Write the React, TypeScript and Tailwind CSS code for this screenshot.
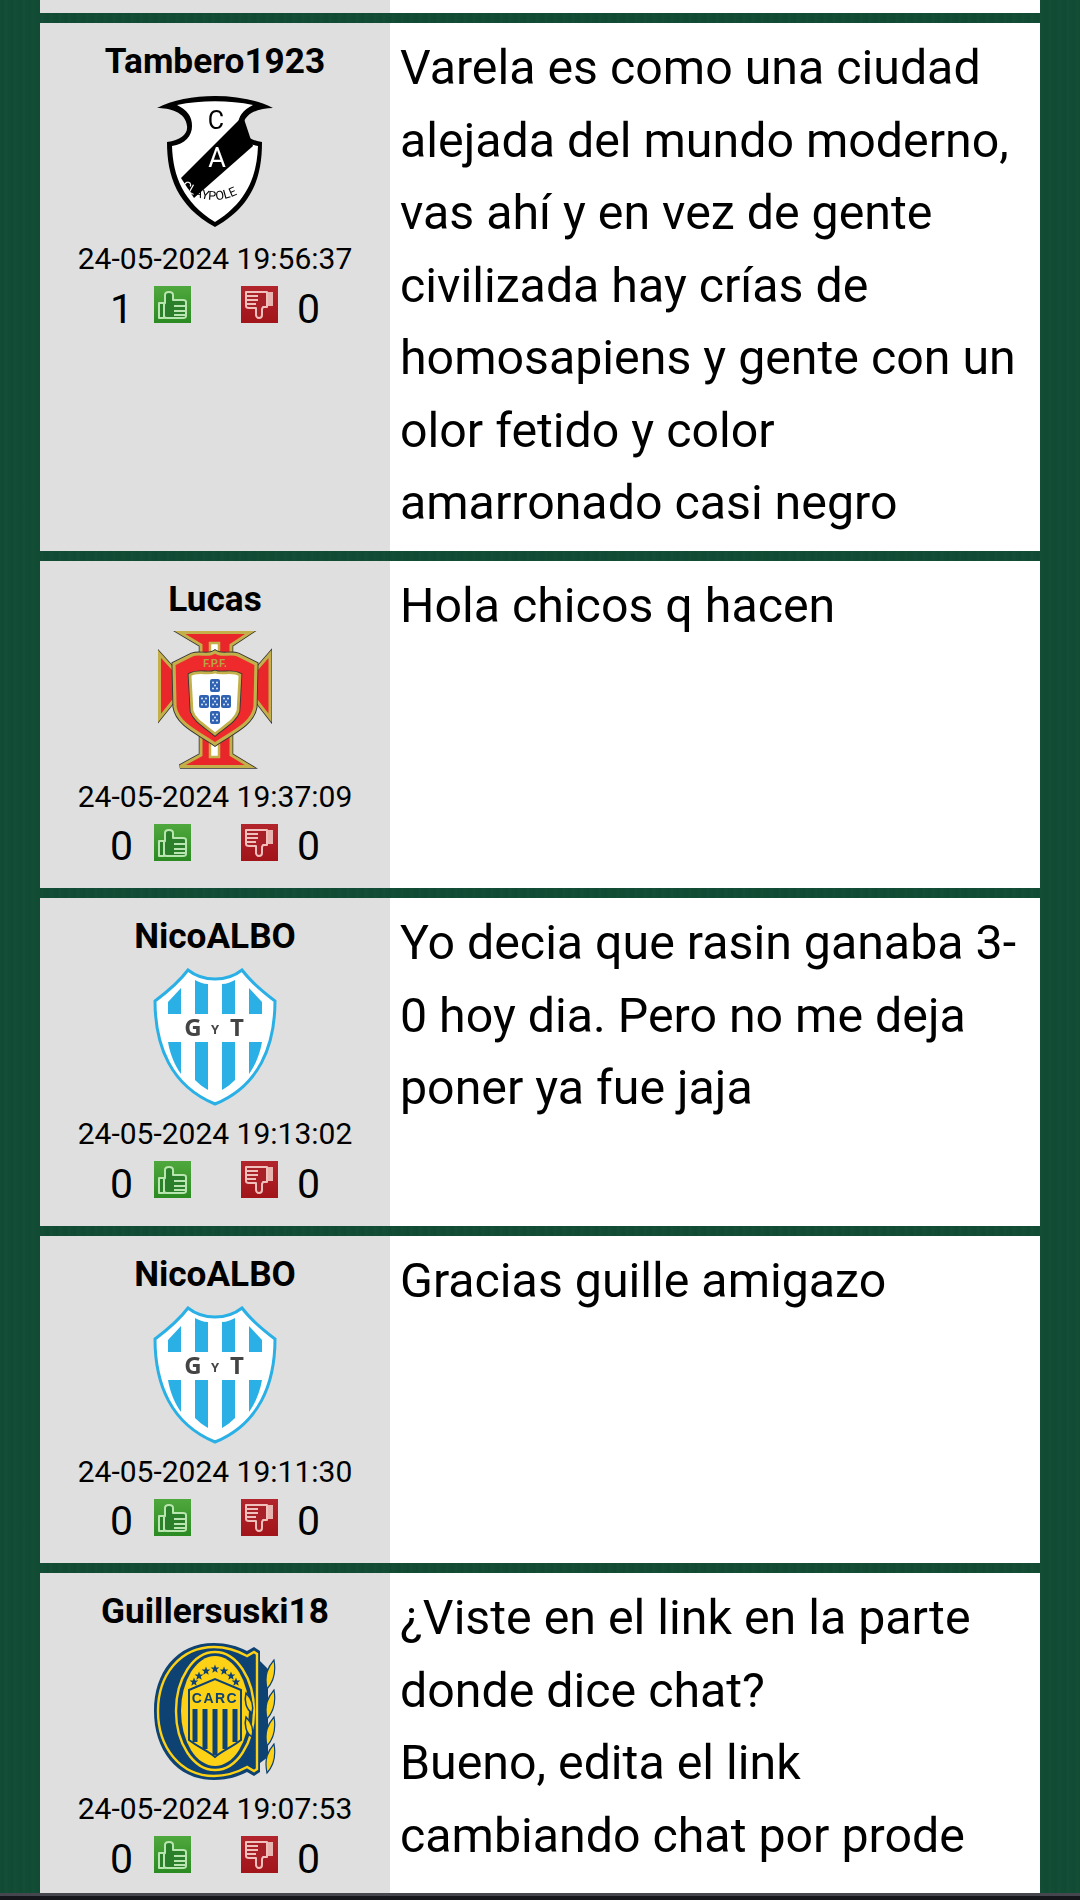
import React from 'react';

const ThumbUp = () => (
  <svg width="37" height="37" viewBox="0 0 37 37" className="block">
    <defs>
      <linearGradient id="upBg" x1="0" y1="0" x2="0" y2="1">
        <stop offset="0" stopColor="#4fa83d" />
        <stop offset="1" stopColor="#2b8a22" />
      </linearGradient>
    </defs>
    <rect width="37" height="37" fill="url(#upBg)" />
    <g className="blur-[0.7px]">
      <path
        d="M5 17h5v15H5zM10 18l1-1V9c0-2 1-3 4-3s4 1 4 3v5h10c2 0 3 1 3 2v14c0 2-1 2-3 2H12l-2-1"
        fill="#2c7f2a"
        stroke="#b9e6b0"
        strokeWidth="2"
        strokeLinejoin="round"
      />
      <path d="M20 20h12M20 25h12M20 29h12" stroke="#b9e6b0" strokeWidth="2" />
    </g>
  </svg>
);

const ThumbDown = () => (
  <svg width="37" height="37" viewBox="0 0 37 37" className="block">
    <defs>
      <linearGradient id="downBg" x1="0" y1="0" x2="0" y2="1">
        <stop offset="0" stopColor="#b3252c" />
        <stop offset="1" stopColor="#a0141a" />
      </linearGradient>
    </defs>
    <rect width="37" height="37" fill="url(#downBg)" />
    <g className="blur-[0.7px]">
      <path
        d="M5 6h21v15h-4l-1 2v6c0 2-1 3-3 3s-3-2-3-3v-7H8c-2 0-3-1-3-2z"
        fill="#a82028"
        stroke="#f0c0bc"
        strokeWidth="2"
        strokeLinejoin="round"
      />
      <path d="M5 10h12M5 14h12M5 18h10" stroke="#f0c0bc" strokeWidth="2" />
      <path d="M27 6h5v14h-5z" fill="#e8b4b0" />
    </g>
  </svg>
);

const Claypole = () => (
  <svg width="116" height="132" viewBox="0 0 116 132" className="block">
    <path
      d="M0 12C30 -4 86 -4 116 12C104 12 87 16 86 30C85 38 92 44 105 46C105 80 96 110 58 131C20 110 10 80 10 46C24 44 31 38 30 30C29 16 12 12 0 12Z"
      fill="#000"
    />
    <path
      d="M20 9C44 4 72 4 96 9C86 14 81 20 81 30C81 40 88 48 101 50C100 80 90 106 58 126C26 106 16 80 15 50C28 48 35 40 35 30C35 20 30 14 20 9Z"
      fill="#fff"
    />
    <path d="M86 20L96 50L37 102L24 82Z" fill="#000" />
    <path id="claypoleArc" d="M24 91Q57 117 92 91" fill="none" />
    <text x="59" y="33" textAnchor="middle" fontFamily="Roboto, sans-serif" fontSize="25" fill="#000">C</text>
    <text x="60" y="71" textAnchor="middle" fontFamily="Roboto, sans-serif" fontSize="27" fill="#fff">A</text>
    <text fontFamily="Roboto, sans-serif" fontSize="12.5" fill="#000">
      <textPath href="#claypoleArc">
        <tspan fill="#fff">CL</tspan>AYPOLE
      </textPath>
    </text>
  </svg>
);

const Quina = ({ x, y }: { x: number; y: number }) => (
  <g>
    <rect x={x} y={y} width="10" height="13" rx="2" fill="#2f62b3" />
    <circle cx={x + 3} cy={y + 3.5} r="1" fill="#dfe8f5" />
    <circle cx={x + 7} cy={y + 3.5} r="1" fill="#dfe8f5" />
    <circle cx={x + 5} cy={y + 6.5} r="1" fill="#dfe8f5" />
    <circle cx={x + 3} cy={y + 9.5} r="1" fill="#dfe8f5" />
    <circle cx={x + 7} cy={y + 9.5} r="1" fill="#dfe8f5" />
  </g>
);

const Portugal = () => {
  const cross = 'M22 1.5H92L73 14V124L92 135.5H22L43 124V14ZM1.5 23L16 39V69L1.5 87ZM112 23L98 39V69L112 87Z';
  const arms = 'M14 40H100V68H14Z';
  return (
    <svg width="114" height="138" viewBox="0 0 114 138" className="block">
      <path d={arms} fill="#e9262a" stroke="#c4b04a" strokeWidth="2" />
      <path d={cross} fill="none" stroke="#333" strokeWidth="4.5" strokeLinejoin="miter" />
      <path d={cross} fill="#e9262a" stroke="#c4b04a" strokeWidth="3" strokeLinejoin="miter" />
      <rect x="52" y="12" width="9" height="16" fill="#fff" stroke="#c4b04a" strokeWidth="2.5" />
      <rect x="52" y="110" width="9" height="16" fill="#fff" stroke="#c4b04a" strokeWidth="2.5" />
      <path
        d="M16 33L34 24C42 21 50 26 57 21C64 26 72 21 80 24L98 33L97 76C94 94 72 102 57 113C42 102 20 94 17 76Z"
        fill="none"
        stroke="#333"
        strokeWidth="5"
      />
      <path
        d="M16 33L34 24C42 21 50 26 57 21C64 26 72 21 80 24L98 33L97 76C94 94 72 102 57 113C42 102 20 94 17 76Z"
        fill="#ef2a2c"
        stroke="#c4b04a"
        strokeWidth="3.2"
      />
      <path
        d="M32 44C40 39 50 44 57 41C64 44 74 39 82 44L80 80C77 90 66 95 57 103C48 95 37 90 34 80Z"
        fill="#fff"
        stroke="#333"
        strokeWidth="4.5"
      />
      <path
        d="M32 44C40 39 50 44 57 41C64 44 74 39 82 44L80 80C77 90 66 95 57 103C48 95 37 90 34 80Z"
        fill="#fff"
        stroke="#c4b04a"
        strokeWidth="2.8"
      />
      <Quina x={52} y={48} />
      <Quina x={41} y={64} />
      <Quina x={52} y={64} />
      <Quina x={63} y={64} />
      <Quina x={52} y={80} />
      <text x="57" y="36" textAnchor="middle" fontFamily="Roboto, sans-serif" fontWeight="700" fontSize="11" fill="#b9a444">
        F.P.F.
      </text>
    </svg>
  );
};

const Gyt = () => (
  <svg width="124" height="138" viewBox="0 0 124 138" className="block">
    <path
      d="M35 2C50 14 74 14 89 2C98 14 110 24 122 33C122 78 106 118 62 136C18 118 2 78 2 33C14 24 26 14 35 2Z"
      fill="#fff"
      stroke="#2bb0e6"
      strokeWidth="3"
    />
    <path d="M15 34L28 20V46H15ZM42 12C46 14 50 16 55 16V46H42ZM69 16C74 16 78 14 82 12V46H69ZM96 20L109 34V46H96Z" fill="#2bb0e6" />
    <path d="M15 74H28V106C22 98 17 86 15 74ZM42 74H55V122C50 119 46 116 42 112ZM69 74H82V112C78 116 74 119 69 122ZM96 74H109C107 86 102 98 96 106Z" fill="#2bb0e6" />
    <text x="40" y="68" textAnchor="middle" fontFamily="'Open Sans', sans-serif" fontWeight="700" fontSize="24" fill="#444">G</text>
    <text x="62" y="66" textAnchor="middle" fontFamily="'Open Sans', sans-serif" fontWeight="700" fontSize="13" fill="#444">Y</text>
    <text x="84" y="68" textAnchor="middle" fontFamily="'Open Sans', sans-serif" fontWeight="700" fontSize="24" fill="#444">T</text>
  </svg>
);

const starPoints = (cx: number, cy: number, r: number) =>
  Array.from({ length: 10 }, (_, i) => {
    const radius = i % 2 === 0 ? r : r * 0.42;
    const angle = (Math.PI / 5) * i - Math.PI / 2;
    return `${cx + radius * Math.cos(angle)},${cy + radius * Math.sin(angle)}`;
  }).join(' ');

const Rosario = () => {
  const stars = [
    [40, 39],
    [45, 33],
    [52, 28],
    [61, 26],
    [70, 28],
    [77, 33],
    [82, 39],
  ];
  const leaves = [
    'M113 46C110 32 114 24 120 17C122 28 120 38 113 46Z',
    'M113 76C110 62 114 54 120 47C122 58 120 68 113 76Z',
    'M113 103C110 89 114 81 120 74C122 85 120 95 113 103Z',
    'M113 130C110 116 114 108 120 101C122 112 120 122 113 130Z',
  ];
  return (
    <svg width="122" height="138" viewBox="0 0 122 138" className="block">
      <path
        d="M60 0C22 0 0 30 0 68C0 106 22 137 60 137C72 137 84 134 93 129L100 133L106 129V120L114 114V26L106 18V8L100 4L93 8C84 3 72 0 60 0Z"
        fill="#0d4272"
      />
      <path
        d="M60 4C26 4 4 32 4 68C4 104 26 133 60 133C72 133 84 129 93 124L100 128L103 126V11L100 9L93 13C84 8 72 4 60 4Z"
        fill="none"
        stroke="#fcd116"
        strokeWidth="2.4"
      />
      <ellipse cx="61" cy="68" rx="39" ry="59" fill="#0d4272" stroke="#fcd116" strokeWidth="2.4" />
      <ellipse cx="61" cy="68" rx="34" ry="55" fill="#fcd116" />
      {stars.map(([x, y]) => (
        <polygon key={x} points={starPoints(x, y, 4.6)} fill="#0d4272" />
      ))}
      <path d="M35 47L61 36L87 47V97C78 104 68 108 61 114C54 108 44 104 35 97Z" fill="#fcd116" stroke="#0d4272" strokeWidth="2" />
      <path d="M41 66V99M51 66V106M61 66V112M71 66V106M81 66V99" stroke="#0d4272" strokeWidth="5" />
      <text x="61" y="60" textAnchor="middle" fontFamily="'Liberation Sans', sans-serif" fontWeight="700" fontSize="14" letterSpacing="1.5" fill="#0d4272">
        CARC
      </text>
      <path d="M92 50C98 56 100 62 98 70C92 66 90 58 92 50ZM92 74C98 80 100 86 98 94C92 90 90 82 92 74Z" fill="#fcd116" stroke="#0d4272" strokeWidth="1.5" />
      {leaves.map((d) => (
        <path key={d} d={d} fill="#fcd116" stroke="#0d4272" strokeWidth="1.2" />
      ))}
    </svg>
  );
};

interface Comment {
  user: string;
  date: string;
  up: number;
  down: number;
  logo: React.ReactNode;
  text: React.ReactNode;
}

const comments: Comment[] = [
  {
    user: 'Tambero1923',
    date: '24-05-2024 19:56:37',
    up: 1,
    down: 0,
    logo: <Claypole />,
    text: 'Varela es como una ciudad alejada del mundo moderno, vas ahí y en vez de gente civilizada hay crías de homosapiens y gente con un olor fetido y color amarronado casi negro',
  },
  { user: 'Lucas', date: '24-05-2024 19:37:09', up: 0, down: 0, logo: <Portugal />, text: 'Hola chicos q hacen' },
  {
    user: 'NicoALBO',
    date: '24-05-2024 19:13:02',
    up: 0,
    down: 0,
    logo: <Gyt />,
    text: 'Yo decia que rasin ganaba 3-0 hoy dia. Pero no me deja poner ya fue jaja',
  },
  { user: 'NicoALBO', date: '24-05-2024 19:11:30', up: 0, down: 0, logo: <Gyt />, text: 'Gracias guille amigazo' },
  {
    user: 'Guillersuski18',
    date: '24-05-2024 19:07:53',
    up: 0,
    down: 0,
    logo: <Rosario />,
    text: (
      <>
        ¿Viste en el link en la parte donde dice chat?
        <br />
        Bueno, edita el link cambiando chat por prode
      </>
    ),
  },
];

const CommentRow: React.FC<{ comment: Comment }> = ({ comment }) => (
  <div className="flex">
    <div className="w-[350px] shrink-0 bg-[#dfdfdf] flex flex-col items-center pt-[18px] pb-[27.5px]">
      <div className="text-[35.2px] leading-[41px] font-bold text-black">{comment.user}</div>
      <div className="h-[138px] mt-[11px] flex items-center justify-center blur-[0.3px]">{comment.logo}</div>
      <div className="mt-[11px] text-[30px] leading-[34px] text-black">{comment.date}</div>
      <div className="mt-[10px] w-full h-[37px] flex items-center justify-center text-[41px] leading-[47px] text-black">
        <span className="w-[24px] pt-[9px] text-center">{comment.up}</span>
        <span className="ml-[20px]">
          <ThumbUp />
        </span>
        <span className="ml-[50px]">
          <ThumbDown />
        </span>
        <span className="ml-[19px] w-[24px] pt-[9px] text-center">{comment.down}</span>
      </div>
    </div>
    <div className="flex-1 bg-white px-[10px] pt-[9px] pb-[11px] text-[48.3px] leading-[72.5px] text-black">{comment.text}</div>
  </div>
);

export default function App() {
  return (
    <div className="relative h-[1900px] overflow-hidden bg-[#124c35] bg-[repeating-linear-gradient(90deg,#124c35_0px,#114a34_3px,#134e37_6px,#124b34_9px)] font-['Roboto',sans-serif]">
      <div className="px-[40px] flex flex-col gap-[10px]">
        <div className="flex h-[13px]">
          <div className="w-[350px] bg-[#dfdfdf]" />
          <div className="flex-1 bg-white" />
        </div>
        {comments.map((c) => (
          <CommentRow key={c.date} comment={c} />
        ))}
      </div>
      <div className="absolute left-0 right-0 bottom-0 h-[7px] bg-[#15151c] border-t-[3px] border-[#46464f]" />
    </div>
  );
}
